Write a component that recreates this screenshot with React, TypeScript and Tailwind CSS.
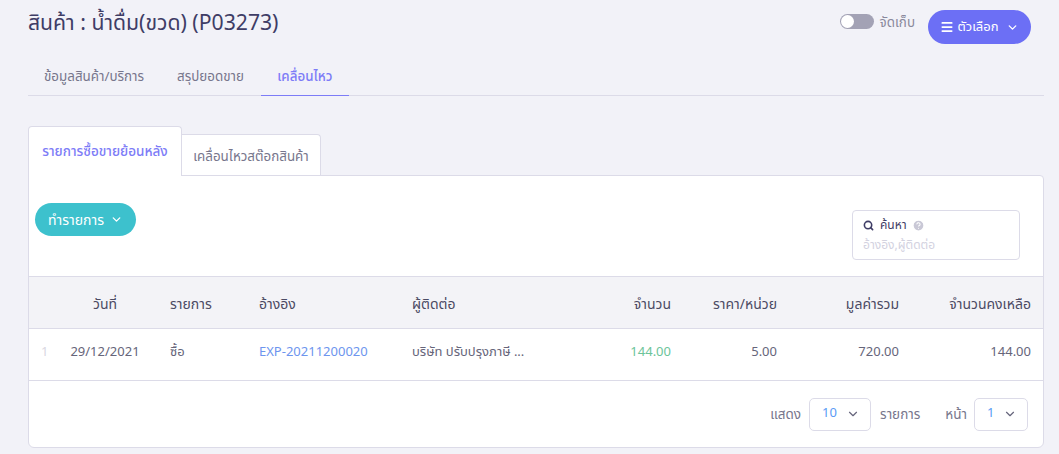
import { ChevronDown, Menu, Search, CircleHelp } from "lucide-react";

const font = "font-['Noto_Sans','Noto_Sans_Thai','Liberation_Sans',sans-serif]";

const columns = [
  { label: "", className: "" },
  { label: "วันที่", className: "text-center" },
  { label: "รายการ", className: "pl-[20px] text-left" },
  { label: "อ้างอิง", className: "pl-3 text-left" },
  { label: "ผู้ติดต่อ", className: "pl-3 text-left" },
  { label: "จำนวน", className: "pr-3 text-right" },
  { label: "ราคา/หน่วย", className: "pr-3 text-right" },
  { label: "มูลค่ารวม", className: "pr-3 text-right" },
  { label: "จำนวนคงเหลือ", className: "pr-3 text-right" },
];

const Select = ({ value, width }: { value: string; width: string }) => (
  <div className={`flex h-[33px] items-center justify-between rounded-[5px] border border-[#dcdbe8] bg-white pl-[12px] pr-[10px] ${width}`}>
    <span className="mb-[3px] text-[13px] text-[#5b9bf5]">{value}</span>
    <ChevronDown className="h-[14px] w-[14px] text-[#66657c]" strokeWidth={2} />
  </div>
);

const App = () => {
  return (
    <div className={`h-[454px] w-[1059px] overflow-hidden bg-[#f2f2f8] pl-[28px] pr-[15px] ${font}`}>
      <div className="flex h-[48px] items-start justify-between">
        <h1 className="mt-[7px] text-[21.2px] leading-[30px] text-[#3f3d66]">สินค้า : น้ำดื่ม(ขวด) (P03273)</h1>
        <div className="mr-[13px] mt-[10px] flex items-start">
          <div className="mt-[4px] flex h-[15px] w-[34px] items-center rounded-full bg-[#a3a2b5] pl-[1px]">
            <div className="h-[13px] w-[13px] rounded-full bg-white" />
          </div>
          <span className="ml-[6px] mt-[2px] text-[13.4px] leading-[20px] text-[#8a899c]">จัดเก็บ</span>
          <button className="ml-[13px] flex h-[34px] w-[103px] items-center justify-center rounded-full bg-[#6c6ff5] text-[13px] text-white">
            <Menu className="mr-[3px] h-[14px] w-[14px]" strokeWidth={3} />
            ตัวเลือก
            <ChevronDown className="ml-[7px] h-[13px] w-[13px]" strokeWidth={2.5} />
          </button>
        </div>
      </div>

      <div className="flex h-[48px] border-b border-[#dcdbe8] pt-[10px] text-[13.4px] text-[#77768c]">
        <div className="px-4 leading-[36px]">ข้อมูลสินค้า/บริการ</div>
        <div className="ml-[1px] px-4 leading-[36px]">สรุปยอดขาย</div>
        <div className="mb-[-1px] ml-[1px] h-[38px] w-[88px] border-b border-[#7d7cf7] text-center font-medium leading-[36px] text-[#7d7cf7]">เคลื่อนไหว</div>
      </div>

      <div className="mt-[30px] flex h-[49px] items-end">
        <div className="relative z-10 mb-[-1px] h-[50px] w-[154px] rounded-t-[4px] border border-b-0 border-[#dcdbe8] bg-white pt-[12px] text-center text-[13.5px] font-medium leading-[24px] text-[#7d7cf7]">
          รายการซื้อขายย้อนหลัง
        </div>
        <div className="h-[41px] w-[139px] rounded-tr-[4px] border border-b-0 border-l-0 border-[#dcdbe8] bg-white pt-[9px] text-center text-[13.4px] leading-[24px] text-[#77768c]">
          เคลื่อนไหวสต๊อกสินค้า
        </div>
      </div>

      <div className="h-[273px] rounded-b-[6px] rounded-tr-[4px] border border-[#dcdbe8] bg-white">
        <div className="flex h-[100px] items-start justify-between pl-[6px] pr-[23px]">
          <button className="mt-[27px] flex h-[33px] w-[101px] items-center justify-center rounded-full bg-[#3dc1cd] text-[14px] text-white">
            ทำรายการ
            <ChevronDown className="ml-[6px] h-[13px] w-[13px]" strokeWidth={2.5} />
          </button>
          <div className="mt-[34px] h-[50px] w-[168px] rounded-[4px] border border-[#dcdbe8] px-[10px] pt-[4px]">
            <div className="flex h-[20px] items-center text-[12px] text-[#3f3d66]">
              <Search className="mr-[6px] h-[11px] w-[11px]" strokeWidth={3.5} />
              ค้นหา
              <CircleHelp className="ml-[5px] h-[13px] w-[13px] fill-[#c9c8d6] text-white" strokeWidth={2} />
            </div>
            <div className="text-[12px] leading-[20px] text-[#d3d2df]">อ้างอิง,ผู้ติดต่อ</div>
          </div>
        </div>

        <table className="w-full table-fixed border-collapse text-[13px]">
          <colgroup>
            <col className="w-[31px]" />
            <col className="w-[90px]" />
            <col className="w-[97px]" />
            <col className="w-[153px]" />
            <col className="w-[170px]" />
            <col className="w-[113px]" />
            <col className="w-[106px]" />
            <col className="w-[122px]" />
            <col className="w-[132px]" />
          </colgroup>
          <thead>
            <tr className="h-[52px] border-y border-[#dcdbe8] bg-[#f3f3f7] text-[14px] text-[#4b4a63]">
              {columns.map((c) => (
                <th key={c.label} className={`pt-[1px] font-normal ${c.className}`}>{c.label}</th>
              ))}
            </tr>
          </thead>
          <tbody>
            <tr className="h-[52px] border-b border-[#dcdbe8] text-[#66657a] [&>td]:pb-[6px]">
              <td className="pl-3 text-[#d9d8e2]">1</td>
              <td className="text-center">29/12/2021</td>
              <td className="pl-[20px]">ซื้อ</td>
              <td className="pl-3 text-[#6d95ee]">EXP-20211200020</td>
              <td className="pl-3">บริษัท ปรับปรุงภาษี ...</td>
              <td className="pr-3 text-right text-[#6cc49a]">144.00</td>
              <td className="pr-3 text-right">5.00</td>
              <td className="pr-3 text-right">720.00</td>
              <td className="pr-3 text-right">144.00</td>
            </tr>
          </tbody>
        </table>

        <div className="flex h-[66px] items-center justify-end pr-[15px] text-[13.5px] text-[#77768c]">
          <span>แสดง</span>
          <div className="ml-[8px]"><Select value="10" width="w-[62px]" /></div>
          <span className="ml-[9px]">รายการ</span>
          <span className="ml-[25px]">หน้า</span>
          <div className="ml-[7px]"><Select value="1" width="w-[54px]" /></div>
        </div>
      </div>
    </div>
  );
};

export default App;
